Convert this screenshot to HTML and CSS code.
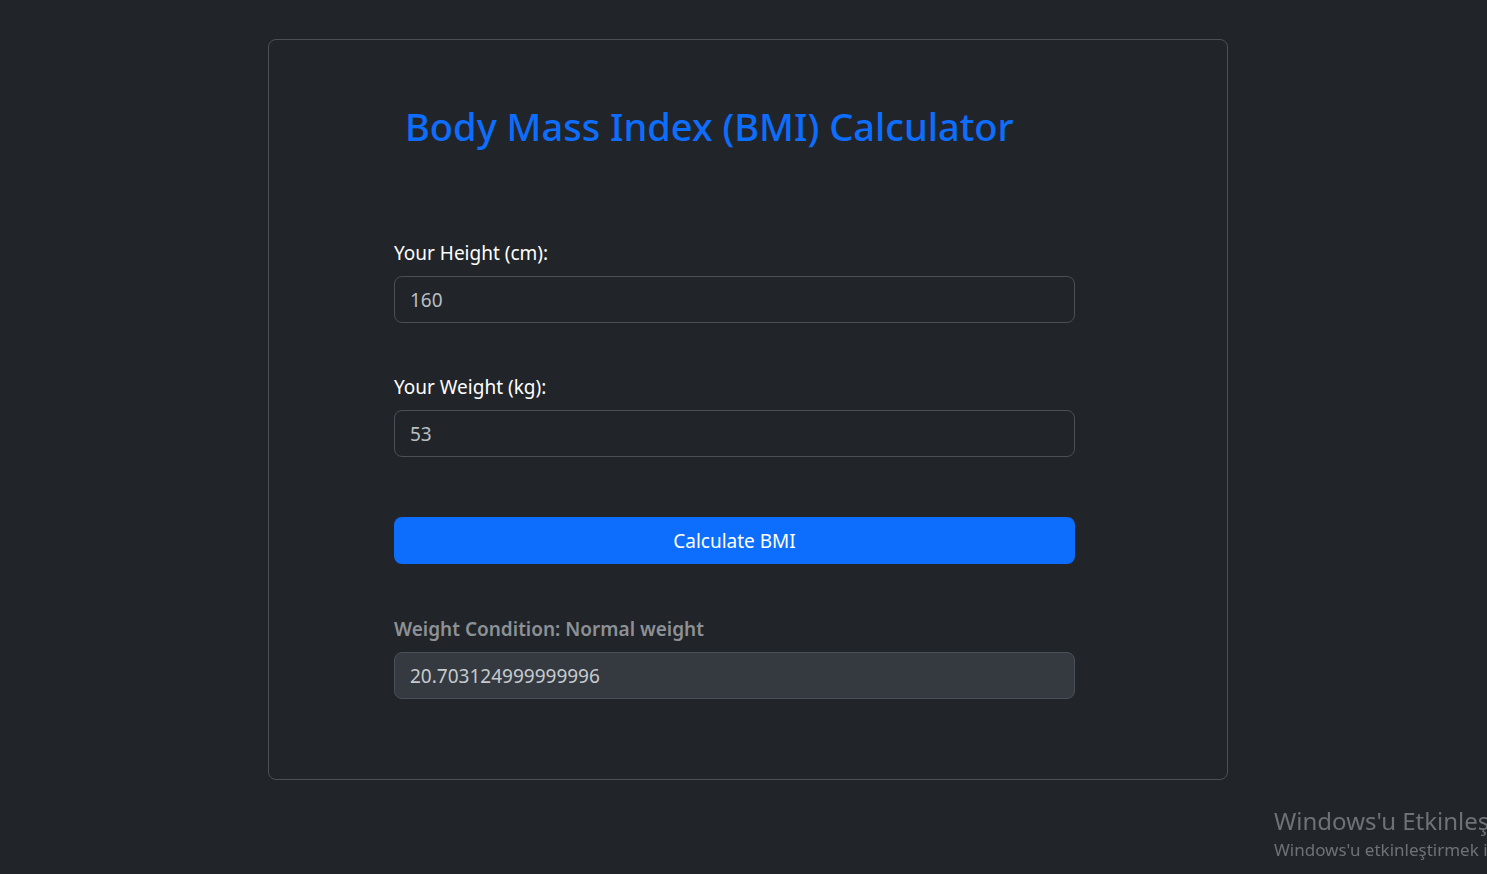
FILE: index.html
```html
<!DOCTYPE html>
<html lang="en">
<head>
<meta charset="utf-8">
<title>BMI Calculator</title>
<link rel="stylesheet" href="styles.css">
</head>
<body>
<main class="card">
  <h1 class="title">Body Mass Index (BMI) Calculator</h1>
  <form class="form">
    <div class="field">
      <label class="label" for="h">Your Height (cm):</label>
      <input class="input" id="h" type="text" value="160">
    </div>
    <div class="field">
      <label class="label" for="w">Your Weight (kg):</label>
      <input class="input" id="w" type="text" value="53">
    </div>
    <button class="btn" type="button">Calculate BMI</button>
    <div class="field result">
      <label class="label label-muted" for="r">Weight Condition: Normal weight</label>
      <input class="input input-readonly" id="r" type="text" value="20.703124999999996" readonly>
    </div>
  </form>
</main>
<div class="watermark">
  <div class="wm-title">Windows'u Etkinleştir</div>
  <div class="wm-sub">Windows'u etkinleştirmek için Ayarlar'a gidin.</div>
</div>
</body>
</html>
```
FILE: styles.css
```css
* { box-sizing: border-box; }
html, body { height: 100%; }
body {
  margin: 0;
  background: #212529;
  color: #dee2e6;
  font-family: "Noto Sans", "Open Sans", sans-serif;
  overflow: hidden;
  padding-top: 39px;
}
.card {
  width: 960px;
  margin-left: 268px;
  border: 1px solid #495057;
  border-radius: 8px;
  padding: 62px 0 80px 125px;
}
.title {
  margin: 0 0 88px 11px;
  font-size: 38px;
  line-height: 48px;
  font-weight: 500;
  color: #0d6efd;
  white-space: nowrap;
}
.form {
  width: 681px;
  display: flex;
  flex-direction: column;
}
.field {
  display: flex;
  flex-direction: column;
  gap: 8px;
}
.field + .field { margin-top: 49px; }
.label {
  font-size: 19px;
  line-height: 30px;
  color: #ffffff;
}
.label-muted {
  color: #8d9196;
  font-weight: 600;
}
.input {
  height: 47px;
  padding: 0 15px;
  border: 1px solid #495057;
  border-radius: 8px;
  background: #212529;
  color: #b9bec3;
  font: inherit;
  font-size: 19px;
  outline: none;
}
.input-readonly {
  background: #343a40;
  color: #c6cacf;
}
.btn {
  margin-top: 60px;
  height: 47px;
  border: 0;
  border-radius: 8px;
  background: #0d6efd;
  color: #ffffff;
  font: inherit;
  font-size: 19px;
}
.result { margin-top: 50px; }
.watermark {
  position: fixed;
  left: 1274px;
  top: 805px;
  white-space: nowrap;
  color: #6e7276;
  font-family: "Noto Sans", sans-serif;
}
.wm-title { font-size: 24px; line-height: 32px; }
.wm-sub { font-size: 17px; line-height: 26px; }
```
